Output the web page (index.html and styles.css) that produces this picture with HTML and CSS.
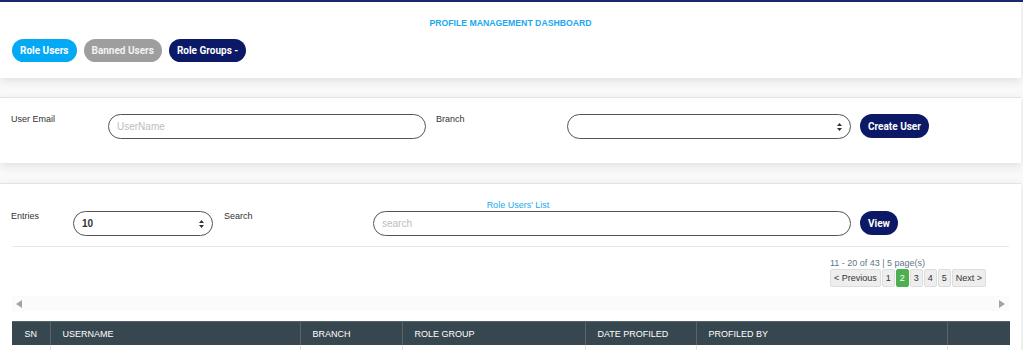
FILE: index.html
```html
<!DOCTYPE html>
<html lang="en">
<head>
    <meta charset="UTF-8">
    <meta name="viewport" content="width=device-width, initial-scale=1.0">
    <title>Profile Management Dashboard</title>
    <link rel="stylesheet" href="styles.css">
</head>
<body>
    <div class="topline"></div>

    <section class="card card-head">
        <h1 class="page-title">PROFILE MANAGEMENT DASHBOARD</h1>
        <div class="tabs">
            <button class="tab tab-blue">Role Users</button>
            <button class="tab tab-gray">Banned Users</button>
            <button class="tab tab-navy">Role Groups -</button>
        </div>
    </section>

    <section class="card card-form">
        <div class="row">
            <label class="lbl lbl-email">User Email</label>
            <input class="field field-email" type="text" placeholder="UserName">
            <label class="lbl lbl-branch">Branch</label>
            <div class="select-wrap select-branch">
                <select class="field"></select>
                <svg class="arrows" width="5" height="8" viewBox="0 0 5 8"><path d="M2.5 0 L5 3 H0 Z M2.5 8 L5 5 H0 Z" fill="#333"/></svg>
            </div>
            <button class="btn">Create User</button>
        </div>
    </section>

    <section class="card card-list">
        <div class="list-title">Role Users' List</div>
        <div class="row">
            <label class="lbl lbl-entries">Entries</label>
            <div class="select-wrap select-entries">
                <select class="field"><option>10</option></select>
                <svg class="arrows" width="5" height="8" viewBox="0 0 5 8"><path d="M2.5 0 L5 3 H0 Z M2.5 8 L5 5 H0 Z" fill="#333"/></svg>
            </div>
            <label class="lbl lbl-search">Search</label>
            <input class="field field-search" type="text" placeholder="search">
            <button class="btn">View</button>
        </div>
        <hr class="divider">

        <div class="pager-box">
            <div class="pager">
                <div class="pager-info">11 - 20 of 43 | 5 page(s)</div>
                <div class="pages">
                    <span class="pg">&lt; Previous</span>
                    <span class="pg">1</span>
                    <span class="pg active">2</span>
                    <span class="pg">3</span>
                    <span class="pg">4</span>
                    <span class="pg">5</span>
                    <span class="pg">Next &gt;</span>
                </div>
            </div>
        </div>

        <div class="hscroll">
            <svg width="6" height="8" viewBox="0 0 6 8"><path d="M0 4 L6 0 V8 Z" fill="#a3a3a3"/></svg>
            <svg width="6" height="8" viewBox="0 0 6 8"><path d="M6 4 L0 0 V8 Z" fill="#a3a3a3"/></svg>
        </div>

        <table class="users">
            <colgroup>
                <col style="width: 38px">
                <col style="width: 250px">
                <col style="width: 102px">
                <col style="width: 183px">
                <col style="width: 111px">
                <col style="width: 251px">
                <col style="width: 63px">
            </colgroup>
            <thead>
                <tr>
                    <th class="c-sn">SN</th>
                    <th>USERNAME</th>
                    <th>BRANCH</th>
                    <th>ROLE GROUP</th>
                    <th>DATE PROFILED</th>
                    <th>PROFILED BY</th>
                    <th></th>
                </tr>
            </thead>
            <tbody>
                <tr>
                    <td></td><td></td><td></td><td></td><td></td><td></td><td></td>
                </tr>
            </tbody>
        </table>
    </section>
</body>
</html>
```

FILE: styles.css
```css
body {
    margin: 0;
    font-family: "Liberation Sans", Arial, sans-serif;
    font-size: 9px;
    color: #333;
    background-color: #f9f9f9;
}
.topline {
    height: 2px;
    background-color: #1c2870;
}
.card {
    background-color: #fff;
    margin-right: 2px;
    box-shadow: 0 3px 9px rgba(0, 0, 0, 0.1);
}
.card-head {
    height: 76px;
    padding: 16px 12px 0;
    box-sizing: border-box;
    margin-bottom: 19px;
}
.page-title {
    margin: 0;
    text-align: center;
    font-size: 8.7px;
    line-height: 11px;
    color: #1aa9f0;
    font-weight: bold;
}
.tabs {
    display: flex;
    gap: 7px;
    margin-top: 10px;
}
.tab {
    height: 23px;
    border: none;
    border-radius: 12px;
    padding: 0 8px;
    font-family: Roboto, "Liberation Sans", sans-serif;
    font-size: 10px;
    font-weight: bold;
    color: #fff;
}
.tab-blue { background-color: #03a9f4; }
.tab-gray { background-color: #9e9e9e; color: #f2f2f2; }
.tab-navy { background-color: #0b1966; }

.card-form {
    height: 66px;
    border-top: 1px solid #e3e3e3;
    padding: 16px 12px 0 11px;
    box-sizing: border-box;
    margin-bottom: 20px;
}
.row {
    display: flex;
    align-items: flex-start;
}
.lbl {
    padding-top: 0;
    line-height: 11px;
    color: #333;
}
.lbl-email { width: 97px; }
.lbl-branch { width: 131px; margin-left: 10px; }
.lbl-entries { width: 62px; }
.lbl-search { width: 149px; margin-left: 11px; }
.field {
    height: 25px;
    box-sizing: border-box;
    border: 1.5px solid #555;
    border-radius: 13px;
    padding: 0 8px;
    font-family: "Liberation Sans", Arial, sans-serif;
    font-size: 10px;
    color: #333;
    background-color: #fff;
    outline: none;
}
.field::placeholder { color: #bdbdbd; }
.field-email { width: 318px; }
.field-search { width: 478px; }
.select-wrap {
    position: relative;
}
.select-wrap select {
    appearance: none;
    width: 100%;
    font-weight: bold;
}
.select-branch { width: 284px; }
.select-entries { width: 140px; }
.arrows {
    position: absolute;
    right: 9px;
    top: 9px;
}
.btn {
    margin-left: 9px;
    height: 24px;
    border: none;
    border-radius: 12px;
    padding: 0 8px;
    background-color: #0b1966;
    color: #fff;
    font-family: Roboto, "Liberation Sans", sans-serif;
    font-size: 10px;
    font-weight: bold;
}

.card-list {
    border-top: 1px solid #e3e3e3;
    padding: 15px 0 0 11px;
    height: 166px;
}
.list-title {
    text-align: center;
    color: #1aa9f0;
    line-height: 12px;
    margin-left: 4px;
}
.divider {
    border: none;
    border-top: 1px solid #e8e8e8;
    margin: 10px 12px 0 1px;
}
.pager-box {
    display: flex;
    justify-content: flex-end;
    padding-right: 35px;
    margin-top: 10px;
}
.pager-info {
    color: #5f7686;
    line-height: 12px;
}
.pages {
    display: flex;
    gap: 1px;
}
.pg {
    height: 18px;
    line-height: 16px;
    box-sizing: border-box;
    padding: 0 3px;
    border: 1px solid #ddd;
    border-radius: 2px;
    background-color: #eee;
    color: #333;
}
.pg.active {
    background-color: #4caf50;
    border-color: #4caf50;
    color: #fff;
}
.hscroll {
    margin: 9px 12px 0 1px;
    height: 15px;
    background-color: #fbfbfb;
    display: flex;
    align-items: center;
    justify-content: space-between;
    padding: 0 4px;
}
.users {
    margin: 10px 0 0 1px;
    width: 998px;
    border-collapse: collapse;
    table-layout: fixed;
}
.users th {
    height: 23px;
    background-color: #37474f;
    color: #fff;
    font-weight: normal;
    text-align: left;
    padding: 0 12px;
    border-left: 1px solid #56656c;
    border-top: 1px solid #56656c;
}
.users th:first-child { border-left: none; }
.users .c-sn { text-align: center; padding: 0; }
.users td {
    height: 28px;
    border-left: 1px solid #e4e4e4;
}
.users td:first-child { border-left: none; }
```
